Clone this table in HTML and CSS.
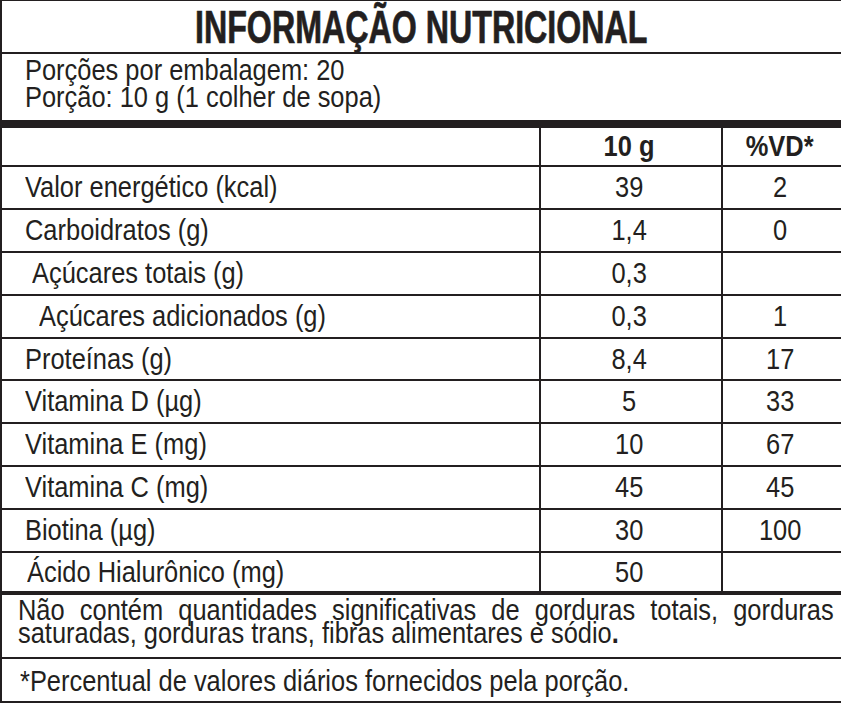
FILE: index.html
```html
<!DOCTYPE html>
<html lang="pt">
<head>
<meta charset="utf-8">
<title>Informação Nutricional</title>
<link rel="stylesheet" href="styles.css">
</head>
<body>
<div class="label">
  <div class="title"><span class="title-text">INFORMAÇÃO NUTRICIONAL</span></div>
  <div class="serving">
    <div class="cond">Porções por embalagem: 20</div>
    <div class="cond">Porção: 10 g (1 colher de sopa)</div>
  </div>
  <div class="table">
    <div class="row head">
      <div class="cell name"></div>
      <div class="cell val"><span class="t">10 g</span></div>
      <div class="cell vd"><span class="t">%VD*</span></div>
    </div>
    <div class="row">
      <div class="cell name"><span class="t">Valor energético (kcal)</span></div>
      <div class="cell val"><span class="t">39</span></div>
      <div class="cell vd"><span class="t">2</span></div>
    </div>
    <div class="row">
      <div class="cell name"><span class="t">Carboidratos (g)</span></div>
      <div class="cell val"><span class="t">1,4</span></div>
      <div class="cell vd"><span class="t">0</span></div>
    </div>
    <div class="row">
      <div class="cell name ind1"><span class="t">Açúcares totais (g)</span></div>
      <div class="cell val"><span class="t">0,3</span></div>
      <div class="cell vd"></div>
    </div>
    <div class="row">
      <div class="cell name ind2"><span class="t">Açúcares adicionados (g)</span></div>
      <div class="cell val"><span class="t">0,3</span></div>
      <div class="cell vd"><span class="t">1</span></div>
    </div>
    <div class="row">
      <div class="cell name"><span class="t">Proteínas (g)</span></div>
      <div class="cell val"><span class="t">8,4</span></div>
      <div class="cell vd"><span class="t">17</span></div>
    </div>
    <div class="row">
      <div class="cell name"><span class="t">Vitamina D (µg)</span></div>
      <div class="cell val"><span class="t">5</span></div>
      <div class="cell vd"><span class="t">33</span></div>
    </div>
    <div class="row">
      <div class="cell name"><span class="t">Vitamina E (mg)</span></div>
      <div class="cell val"><span class="t">10</span></div>
      <div class="cell vd"><span class="t">67</span></div>
    </div>
    <div class="row">
      <div class="cell name"><span class="t">Vitamina C (mg)</span></div>
      <div class="cell val"><span class="t">45</span></div>
      <div class="cell vd"><span class="t">45</span></div>
    </div>
    <div class="row">
      <div class="cell name"><span class="t">Biotina (µg)</span></div>
      <div class="cell val"><span class="t">30</span></div>
      <div class="cell vd"><span class="t">100</span></div>
    </div>
    <div class="row last">
      <div class="cell name ind0"><span class="t">Ácido Hialurônico (mg)</span></div>
      <div class="cell val"><span class="t">50</span></div>
      <div class="cell vd"></div>
    </div>
  </div>
  <div class="note"><div class="note-inner">Não contém quantidades significativas de gorduras totais, gorduras saturadas, gorduras trans, fibras alimentares e sódio<b>.</b></div></div>
  <div class="foot"><div class="cond">*Percentual de valores diários fornecidos pela porção.</div></div>
</div>
</body>
</html>
```
FILE: styles.css
```css
html, body {
  margin: 0;
  padding: 0;
  background: #ffffff;
}
body {
  width: 841px;
  height: 704px;
  overflow: hidden;
  font-family: "Liberation Sans", Arial, sans-serif;
  color: #231f20;
}
.label {
  width: 845px;
  border-top: 1px solid #231f20;
  border-left: 2px solid #231f20;
  box-sizing: border-box;
  overflow: hidden;
}
.title {
  height: 53px;
  border-bottom: 2px solid #231f20;
  box-sizing: border-box;
  display: flex;
  justify-content: center;
  align-items: center;
  padding-right: 4px;
}
.title-text {
  display: inline-block;
  font-weight: bold;
  font-size: 46px;
  line-height: 52px;
  transform: scaleX(0.70);
  -webkit-text-stroke: 0.7px #231f20;
}
.cond {
  transform: scaleX(0.877);
  transform-origin: left center;
  white-space: nowrap;
}
.serving {
  height: 74px;
  box-sizing: border-box;
  border-bottom: 8px solid #231f20;
  padding: 3px 0 0 23px;
  font-size: 29px;
  line-height: 27px;
}
.row {
  display: grid;
  grid-template-columns: 537px 182px 1fr;
  height: 42.9px;
  box-sizing: border-box;
  border-bottom: 2px solid #231f20;
}
.row.head {
  height: 39px;
}
.row.last {
  height: 42px;
  border-bottom: 4px solid #231f20;
}
.cell {
  display: flex;
  align-items: center;
  font-size: 29px;
}
.t {
  display: inline-block;
  white-space: nowrap;
  transform: scaleX(0.877);
}
.name .t {
  transform-origin: left center;
}
.val .t, .vd .t {
  transform-origin: center center;
}
.head .cell {
  font-weight: bold;
}
.name {
  padding-left: 23px;
}
.name.ind0 { padding-left: 25px; }
.name.ind1 { padding-left: 30px; }
.name.ind2 { padding-left: 37px; }
.val, .vd {
  justify-content: center;
  border-left: 2px solid #231f20;
}
.val { padding-right: 4px; }
.vd { padding-right: 8px; }
.note {
  width: 841px;
  height: 64px;
  box-sizing: border-box;
  padding: 4px 0 0 16px;
  border-bottom: 2px solid #231f20;
  overflow: hidden;
}
.note-inner {
  width: 930px;
  font-size: 29px;
  line-height: 23px;
  text-align: justify;
  transform: scaleX(0.877);
  transform-origin: left top;
}
.note-inner b {
  font-weight: bold;
}
.foot {
  height: 44px;
  box-sizing: border-box;
  border-bottom: 2px solid #231f20;
  padding: 7px 0 0 18px;
  font-size: 29px;
  line-height: 30px;
}
```
